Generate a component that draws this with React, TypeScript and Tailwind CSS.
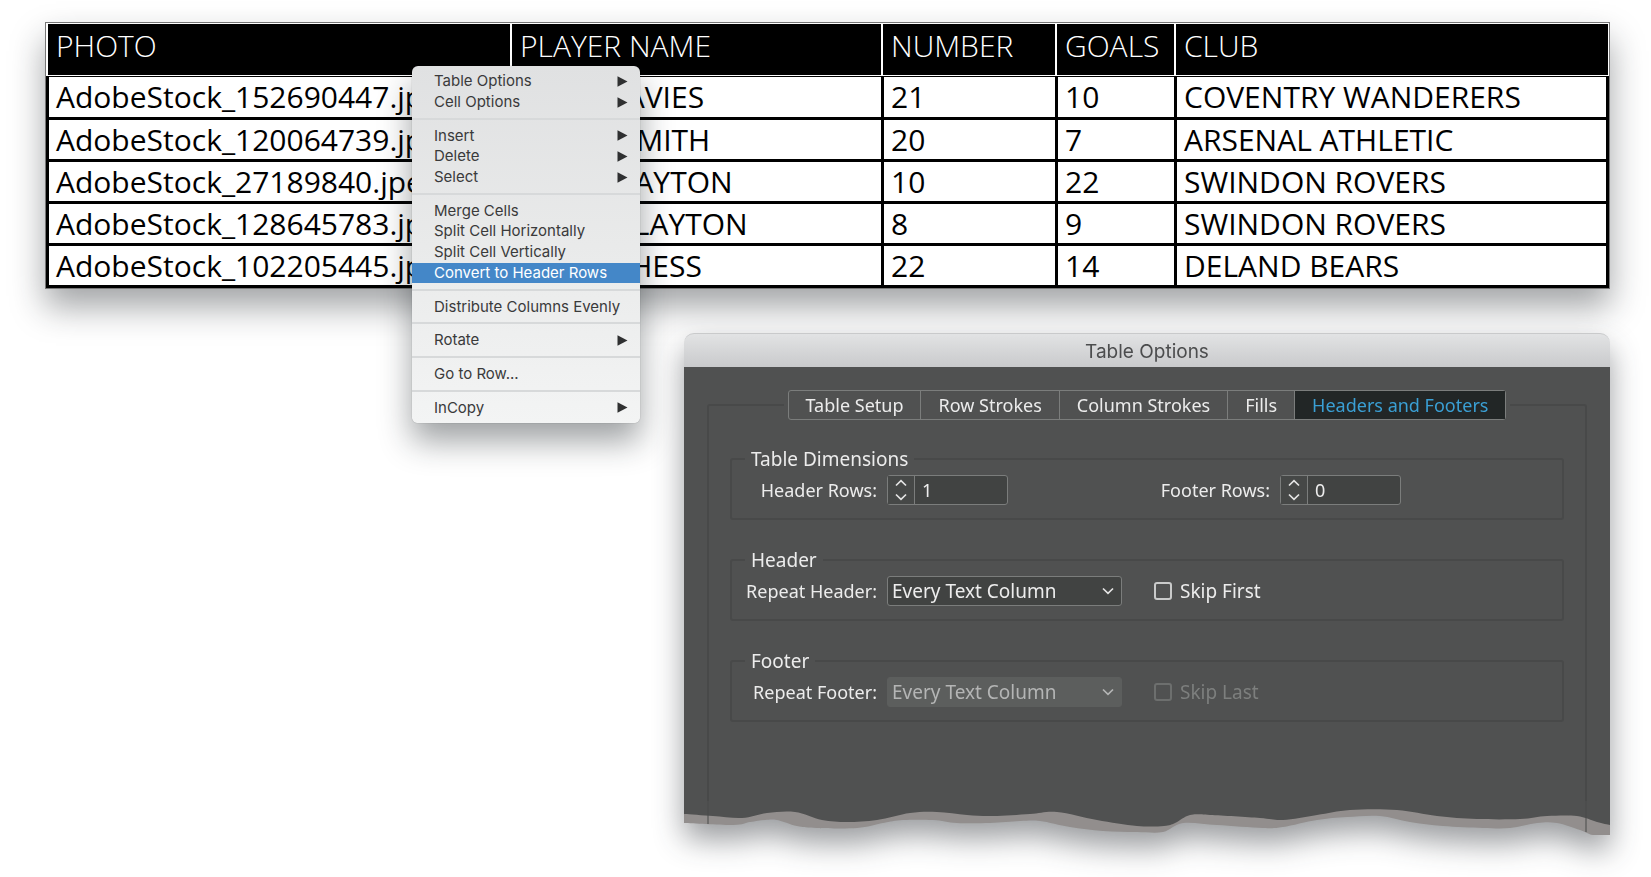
import React from 'react';

type Point = [number, number];

const players = [
  { photo: 'AdobeStock_152690447.jpeg', name: 'ALAN DAVIES', number: 21, goals: 10, club: 'COVENTRY WANDERERS' },
  { photo: 'AdobeStock_120064739.jpeg', name: 'DEREK SMITH', number: 20, goals: 7, club: 'ARSENAL ATHLETIC' },
  { photo: 'AdobeStock_27189840.jpeg', name: 'CARL CLAYTON', number: 10, goals: 22, club: 'SWINDON ROVERS' },
  { photo: 'AdobeStock_128645783.jpeg', name: 'JAMES CLAYTON', number: 8, goals: 9, club: 'SWINDON ROVERS' },
  { photo: 'AdobeStock_102205445.jpeg', name: 'AARON HESS', number: 22, goals: 14, club: 'DELAND BEARS' },
];

const menuGroups: { label: string; submenu?: boolean; active?: boolean }[][] = [
  [{ label: 'Table Options', submenu: true }, { label: 'Cell Options', submenu: true }],
  [{ label: 'Insert', submenu: true }, { label: 'Delete', submenu: true }, { label: 'Select', submenu: true }],
  [
    { label: 'Merge Cells' },
    { label: 'Split Cell Horizontally' },
    { label: 'Split Cell Vertically' },
    { label: 'Convert to Header Rows', active: true },
  ],
  [{ label: 'Distribute Columns Evenly' }],
  [{ label: 'Rotate', submenu: true }],
  [{ label: 'Go to Row...' }],
  [{ label: 'InCopy', submenu: true }],
];

const paperEdge: Point[] = [
  [0, 22], [49, 24], [66, 21], [81, 19], [93, 19], [113, 25], [133, 27], [173, 27], [199, 22], [219, 19], [249, 19],
  [273, 22], [306, 22], [336, 20], [356, 20], [386, 26], [419, 30], [453, 31], [479, 31], [499, 22], [533, 24],
  [579, 27], [599, 26], [633, 19], [663, 16], [696, 15], [726, 21], [759, 25], [799, 27], [826, 27], [853, 22],
  [873, 22], [896, 29], [909, 34], [926, 34],
];

const panelEdge: Point[] = [
  [0, 13], [29, 15], [58, 17], [83, 12], [111, 11], [138, 19], [163, 21], [193, 19], [226, 12], [253, 11], [283, 14],
  [309, 15], [346, 13], [373, 11], [413, 19], [453, 25], [480, 25], [491, 22], [506, 14], [526, 14], [576, 17],
  [599, 19], [633, 14], [666, 9], [713, 9], [753, 15], [793, 18], [836, 18], [863, 15], [893, 15], [913, 21], [926, 24],
];

function smoothEdge(points: Point[]): string {
  let d = `M0 0L${points[0][0]} ${points[0][1]}`;
  for (let i = 0; i < points.length - 1; i++) {
    const p0 = points[Math.max(i - 1, 0)];
    const p1 = points[i];
    const p2 = points[i + 1];
    const p3 = points[Math.min(i + 2, points.length - 1)];
    d += `C${p1[0] + (p2[0] - p0[0]) / 6} ${p1[1] + (p2[1] - p0[1]) / 6} ${p2[0] - (p3[0] - p1[0]) / 6} ${
      p2[1] - (p3[1] - p1[1]) / 6
    } ${p2[0]} ${p2[1]}`;
  }
  return d + 'L926 0Z';
}

function PlayerTable() {
  const th =
    'h-[53px] border-y border-l-2 border-white bg-black pb-2 pl-2 text-left font-light text-white last:border-r';
  const td =
    'h-[42px] border-t-[3px] border-l-[3px] border-black bg-white pl-[7px] last:border-r-[3px] group-first:h-[41px] group-first:border-t group-last:h-[45px] group-last:border-b-[3px]';
  return (
    <div className="border border-[#777] shadow-[0_18px_32px_rgba(25,30,36,0.4)]">
      <table className="w-full table-fixed border-separate border-spacing-0 font-['Open_Sans','Noto_Sans',sans-serif] text-[30px] leading-[38px] whitespace-nowrap text-black">
        <colgroup>
          <col className="w-[464px]" />
          <col className="w-[371px]" />
          <col className="w-[174px]" />
          <col className="w-[119px]" />
          <col />
        </colgroup>
        <thead>
          <tr>
            {['PHOTO', 'PLAYER NAME', 'NUMBER', 'GOALS', 'CLUB'].map((h) => (
              <th key={h} scope="col" className={th}>
                {h}
              </th>
            ))}
          </tr>
        </thead>
        <tbody>
          {players.map((p) => (
            <tr key={p.photo} className="group">
              <td className={td}>{p.photo}</td>
              <td className={td}>{p.name}</td>
              <td className={td}>{p.number}</td>
              <td className={td}>{p.goals}</td>
              <td className={td}>{p.club}</td>
            </tr>
          ))}
        </tbody>
      </table>
    </div>
  );
}

function ContextMenu() {
  return (
    <div
      role="menu"
      aria-label="Table context menu"
      className="absolute top-[66px] left-[412px] z-10 flex h-[357px] w-[228px] flex-col rounded-md bg-gradient-to-b from-[#e0e1e2] via-[#e9eaea] to-[#f3f4f4] py-[5px] font-['Inter',sans-serif] text-[15px] leading-5 text-[#3a3a3b] shadow-[0_0_1px_rgba(0,0,0,0.45),0_18px_32px_rgba(25,30,36,0.42)]"
    >
      {menuGroups.map((group, g) => (
        <React.Fragment key={g}>
          {g > 0 && (
            <div role="separator" className="flex h-[13px] shrink-0 items-center">
              <span className="h-[2px] w-full bg-[#d7d9da]" />
            </div>
          )}
          {group.map((item) => (
            <button
              key={item.label}
              type="button"
              role="menuitem"
              className={
                item.active
                  ? 'flex min-h-0 flex-1 items-center justify-between bg-[#4487c8] pr-3 pl-[22px] text-white'
                  : 'flex min-h-0 flex-1 items-center justify-between pr-3 pl-[22px]'
              }
            >
              {item.label}
              {item.submenu && (
                <svg aria-hidden="true" viewBox="0 0 11 11" className="size-[11px] fill-[#2f3031]">
                  <path d="M0.5 0.3L10.5 5.5L0.5 10.7Z" />
                </svg>
              )}
            </button>
          ))}
        </React.Fragment>
      ))}
    </div>
  );
}

function Chevron({ up = false, className }: { up?: boolean; className: string }) {
  return (
    <svg aria-hidden="true" viewBox="0 0 12 8" fill="none" stroke="currentColor" strokeWidth="1.7" className={className}>
      <path d={up ? 'M1 6.5L6 1.7L11 6.5' : 'M1 1.5L6 6.3L11 1.5'} />
    </svg>
  );
}

function Spinner({ id, value }: { id: string; value: number }) {
  return (
    <div className="flex h-[30px] w-[121px] rounded-[3px] border border-[#7b7d7c] bg-[#414342]">
      <div className="flex w-[27px] flex-col items-center justify-center gap-[6px] border-r border-[#7b7d7c] bg-[#464847] text-[#e4e4e4]">
        <button type="button" aria-label="Increase" className="flex">
          <Chevron up className="h-2 w-3" />
        </button>
        <button type="button" aria-label="Decrease" className="flex">
          <Chevron className="h-2 w-3" />
        </button>
      </div>
      <input id={id} defaultValue={value} className="w-full min-w-0 flex-1 bg-transparent pl-[7px] text-[#ededed] outline-none" />
    </div>
  );
}

function Group({ title, children }: { title: string; children: React.ReactNode }) {
  return (
    <fieldset className="rounded-[3px] border-2 border-[#484949]">
      <legend className="ml-[13px] h-[26px] px-[6px] text-[19px] leading-[26px]">{title}</legend>
      <div className="flex items-center pt-[3px] pb-[13px]">{children}</div>
    </fieldset>
  );
}

function RepeatRow({ id, label, skip, disabled = false }: { id: string; label: string; skip: string; disabled?: boolean }) {
  return (
    <>
      <label htmlFor={id} className="w-[145px] text-right">
        {label}
      </label>
      <div className="ml-[10px] grid w-[235px] items-center">
        <select
          id={id}
          disabled={disabled}
          className="col-start-1 row-start-1 h-[30px] w-full appearance-none rounded-[3px] border border-[#7b7d7c] bg-[#414342] pl-1 text-[19px] text-[#ededed] opacity-100 disabled:border-[#5c5e5d] disabled:bg-[#5c5e5d] disabled:text-[#b4b5b5]"
        >
          <option>Every Text Column</option>
        </select>
        <Chevron
          className={
            disabled
              ? 'pointer-events-none col-start-1 row-start-1 mr-2 h-2 w-3 justify-self-end text-[#b4b5b5]'
              : 'pointer-events-none col-start-1 row-start-1 mr-2 h-2 w-3 justify-self-end text-[#e4e4e4]'
          }
        />
      </div>
      <label
        className={
          disabled ? 'ml-8 flex items-center gap-2 text-[19px] text-[#7d7f7e]' : 'ml-8 flex items-center gap-2 text-[19px]'
        }
      >
        <input
          type="checkbox"
          disabled={disabled}
          className="size-[18px] appearance-none rounded-[3px] border-2 border-[#c9caca] disabled:border-[#6d6f6e]"
        />
        {skip}
      </label>
    </>
  );
}

function TableOptionsDialog() {
  const tabs = ['Table Setup', 'Row Strokes', 'Column Strokes', 'Fills', 'Headers and Footers'];
  return (
    <section
      aria-label="Table Options"
      className="mt-11 ml-[639px] [filter:drop-shadow(0_15px_15px_rgba(25,30,36,0.44))]"
    >
      <h2 className="flex h-[34px] items-center justify-center rounded-t-[10px] border-t border-[#c9cacb] bg-gradient-to-b from-[#e2e3e4] to-[#c9cacc] pt-[2px] font-['Inter',sans-serif] text-[19px] leading-6 font-normal text-[#4c4d4e]">
        Table Options
      </h2>
      <div className="bg-[#505151] px-[23px] pt-[23px] font-['Noto_Sans','Open_Sans',sans-serif] text-[18px] leading-6 text-[#ececec]">
        <fieldset className="h-[411px] rounded-t-[3px] border-2 border-b-0 border-[#484949]">
          <legend className="mx-auto px-1">
            <div role="tablist" className="flex h-[30px] divide-x divide-[#7b7d7c] rounded-[3px] border border-[#7b7d7c] leading-7">
              {tabs.map((tab, i) => (
                <button
                  key={tab}
                  type="button"
                  role="tab"
                  aria-selected={i === 4}
                  className={i === 4 ? 'bg-[#222626] px-[17px] text-[#3a9fd4]' : 'px-[17px]'}
                >
                  {tab}
                </button>
              ))}
            </div>
          </legend>
          <div className="mx-[21px] mt-[26px] flex flex-col gap-[27px]">
            <Group title="Table Dimensions">
              <label htmlFor="header-rows" className="w-[145px] text-right">
                Header Rows:
              </label>
              <div className="ml-[10px] w-[235px]">
                <Spinner id="header-rows" value={1} />
              </div>
              <label htmlFor="footer-rows" className="ml-8 w-[116px] text-right">
                Footer Rows:
              </label>
              <div className="ml-[10px]">
                <Spinner id="footer-rows" value={0} />
              </div>
            </Group>
            <Group title="Header">
              <RepeatRow id="repeat-header" label="Repeat Header:" skip="Skip First" />
            </Group>
            <Group title="Footer">
              <RepeatRow id="repeat-footer" label="Repeat Footer:" skip="Skip Last" disabled />
            </Group>
          </div>
        </fieldset>
      </div>
      <svg aria-hidden="true" viewBox="0 0 926 34" preserveAspectRatio="none" className="block h-[34px] w-full">
        <path d={smoothEdge(paperEdge)} fill="#928e8d" />
        <path d={smoothEdge(panelEdge)} fill="#505151" />
        <path d="M24 0V23M902 0V31" stroke="#484949" strokeWidth="2" strokeOpacity="0.5" />
      </svg>
    </section>
  );
}

export default function App() {
  return (
    <main className="relative min-h-screen bg-white pt-[22px] pr-[41px] pb-11 pl-[45px]">
      <PlayerTable />
      <ContextMenu />
      <TableOptionsDialog />
    </main>
  );
}
